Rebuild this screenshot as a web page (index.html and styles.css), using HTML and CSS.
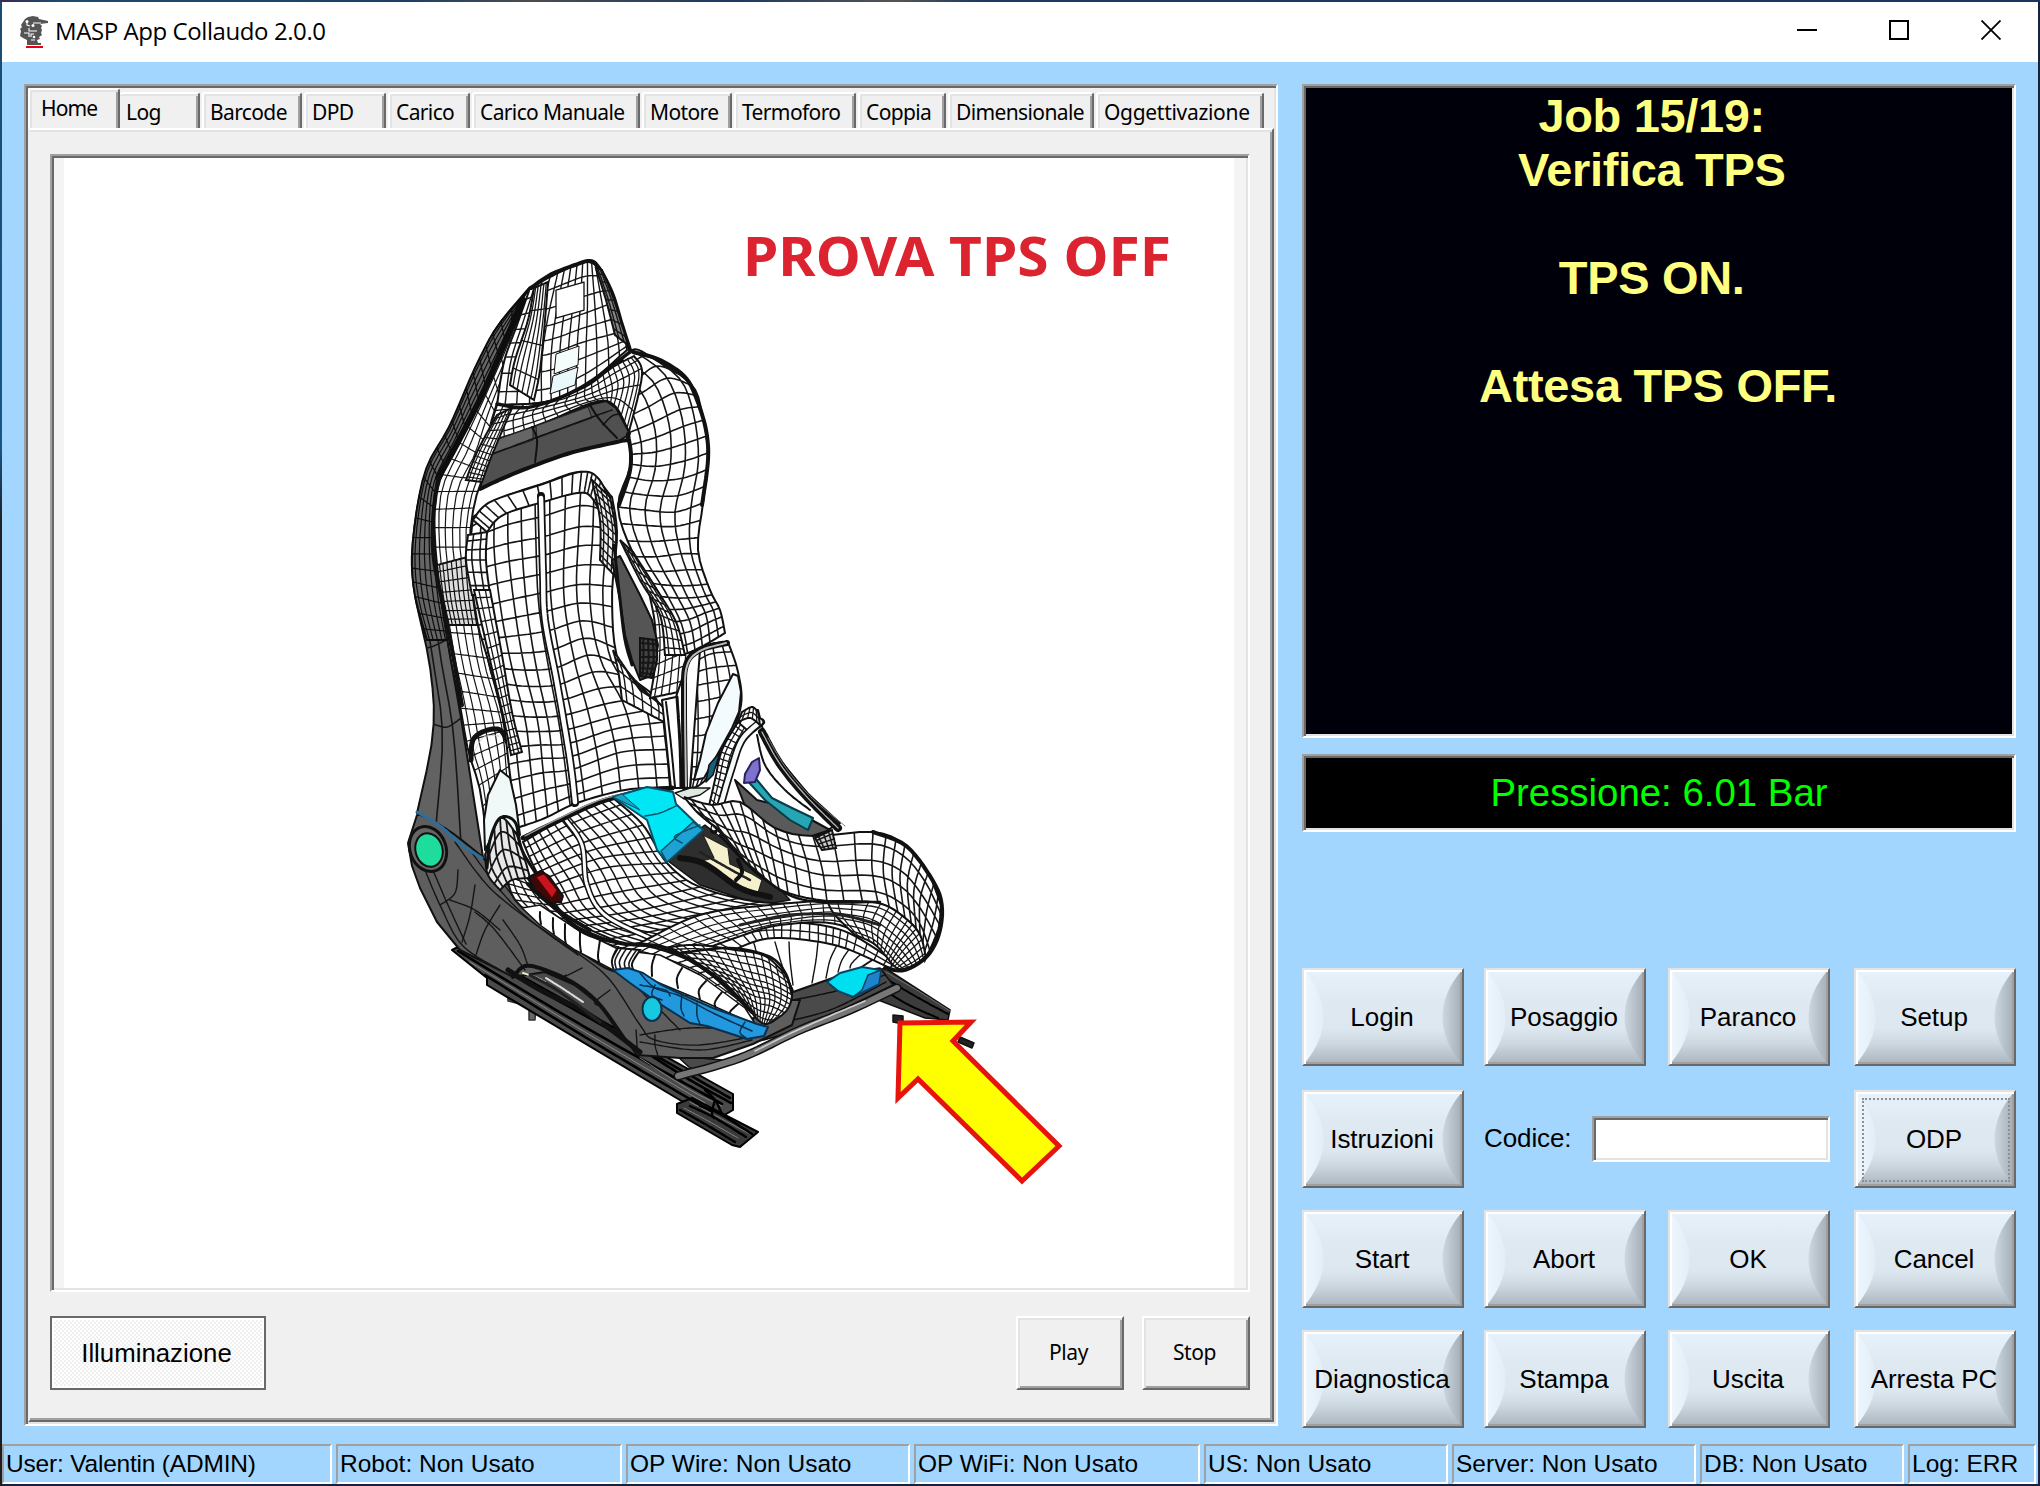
FILE: index.html
```html
<!DOCTYPE html>
<html lang="it">
<head>
<meta charset="utf-8">
<title>MASP App Collaudo 2.0.0</title>
<link rel="stylesheet" href="styles.css">
</head>
<body>
<div class="window">
  <header class="titlebar">
    <svg class="app-icon" viewBox="0 0 28 32" width="28" height="32">
      <path d="M3 6 L5 3 L8 1 L13 0 L18 1 L19 3 L28 5 V7 L20 8 L22 10 L21 12 L22 14 L21 17 L22 19 L19 21 L20 23 L17 24 L18 27 L21 27 V29 H7 V24 L3 22 L0 20 L1 15 L0 13 L2 11 L1 9 Z" fill="#555"/>
      <path d="M7 6 v3 l3 1 M13 7 h8 M9 12 v3 h8 M4 17 h5 v4 M14 18 h-3 v3 M11 24 h4" fill="none" stroke="#fff" stroke-width="1.1"/>
      <circle cx="7" cy="5.500" r="1.500" fill="#fff"/><circle cx="13" cy="9.500" r="1.500" fill="#fff"/><circle cx="14" cy="21" r="1.300" fill="#fff"/>
      <rect x="6" y="30" width="17" height="2" fill="#e60012"/>
    </svg>
    <h1 class="title">MASP App Collaudo 2.0.0</h1>
    <div class="controls">
      <svg viewBox="0 0 20 20" width="20" height="20"><rect y="9" width="20" height="2"/></svg>
      <svg viewBox="0 0 20 20" width="20" height="20"><rect x="1" y="1" width="18" height="18" fill="none" stroke="#000" stroke-width="2"/></svg>
      <svg viewBox="0 0 20 20" width="20" height="20"><path d="M.5 .5 L19.5 19.5 M19.5 .5 L.5 19.5" stroke="#000" stroke-width="1.8"/></svg>
    </div>
  </header>

  <main class="content">
    <section class="notebook">
      <nav class="tabs">
        <span class="tab tab-active w-home">Home</span>
        <span class="tab tab-first w-log">Log</span>
        <span class="tab w-barcode">Barcode</span>
        <span class="tab w-dpd">DPD</span>
        <span class="tab w-carico">Carico</span>
        <span class="tab w-manuale">Carico Manuale</span>
        <span class="tab w-motore">Motore</span>
        <span class="tab w-termo">Termoforo</span>
        <span class="tab w-coppia">Coppia</span>
        <span class="tab w-dim">Dimensionale</span>
        <span class="tab w-ogg">Oggettivazione</span>
      </nav>
      <div class="page">
        <div class="picture">
          <svg id="seat" class="seat" viewBox="64 158 1170 1130" width="1170" height="1130"></svg>
        </div>
        <div class="page-actions">
          <button class="toggle">Illuminazione</button>
          <button class="plain">Play</button>
          <button class="plain">Stop</button>
        </div>
      </div>
    </section>

    <aside class="side">
      <div class="message"><p>Job 15/19: </p><p>Verifica TPS </p><p> </p><p>TPS ON. </p><p> </p><p>Attesa TPS OFF.</p></div>
      <div class="pressure">Pressione: 6.01 Bar</div>
      <div class="keys">
        <button class="key"><span>Login</span></button>
        <button class="key"><span>Posaggio</span></button>
        <button class="key"><span>Paranco</span></button>
        <button class="key"><span>Setup</span></button>
        <button class="key"><span>Istruzioni</span></button>
        <label class="code"><span class="code-label">Codice:</span><input class="code-input" type="text"></label>
        <button class="key key-focus"><span>ODP</span></button>
        <button class="key"><span>Start</span></button>
        <button class="key"><span>Abort</span></button>
        <button class="key"><span>OK</span></button>
        <button class="key"><span>Cancel</span></button>
        <button class="key"><span>Diagnostica</span></button>
        <button class="key"><span>Stampa</span></button>
        <button class="key"><span>Uscita</span></button>
        <button class="key"><span>Arresta PC</span></button>
      </div>
    </aside>
  </main>

  <footer class="status">
    <span>User: Valentin (ADMIN)</span>
    <span>Robot: Non Usato</span>
    <span>OP Wire: Non Usato</span>
    <span>OP WiFi: Non Usato</span>
    <span>US: Non Usato</span>
    <span>Server: Non Usato</span>
    <span>DB: Non Usato</span>
    <span>Log: ERR</span>
  </footer>
</div>
<script src="seat.js"></script>
</body>
</html>
```
FILE: styles.css
```css
* { box-sizing: border-box; }
body {
  margin: 0;
  width: 2040px;
  height: 1486px;
  padding: 2px;
  background: linear-gradient(90deg, #3b2a55 0, #1c4a70 3%, #1d4066 20%, #4b4d50 26%, #1b3a63 36%, #555 44%, #1b3a63 48%, #1b3563 100%) top / 100% 2px no-repeat,
    linear-gradient(#1c4a70, #16568a 30%, #202023 35%, #1c1c22) left / 2px 100% no-repeat,
    #15233f;
  overflow: hidden;
}
button, input { font: inherit; color: inherit; border-radius: 0; padding: 0; margin: 0; }
.window {
  width: 2036px;
  height: 1482px;
  background: #a2d6ff;
  display: flex;
  flex-direction: column;
  color: #000;
}
.titlebar {
  height: 60px;
  background: #fff;
  display: flex;
  align-items: center;
  padding: 0 37px 0 18px;
}
.app-icon { display: block; }
.title {
  margin: 0 0 2px 7px;
  font: 400 24px/34px "Open Sans", "Noto Sans", sans-serif;
  letter-spacing: -0.42px;
  flex: 1;
}
.controls { display: flex; gap: 72px; margin-top: -4px; }
.controls svg { display: block; }

.content { flex: 1; display: flex; padding: 22px 22px 0; min-height: 0; }

/* Notebook */
.notebook {
  width: 1254px;
  height: 1342px;
  background: #f0f0f0;
  border: 2px solid;
  border-color: #a0a0a0 #fff #fff #a0a0a0;
  box-shadow: inset 2px 2px #696969, inset -2px -2px #e3e3e3;
  padding: 2px;
  display: flex;
  flex-direction: column;
}
.tabs {
  height: 42px;
  display: flex;
  align-items: flex-end;
  gap: 2px;
  font: 400 21px/28px "Noto Sans", sans-serif;
  letter-spacing: -0.62px;
  white-space: nowrap;
}
.tab {
  height: 36px;
  margin-bottom: 2px;
  border: 2px solid;
  border-color: #fff #696969 transparent #fff;
  border-bottom: 0;
  border-radius: 3px 3px 0 0;
  box-shadow: inset 2px 2px #e3e3e3, inset -2px 0 #a0a0a0;
  padding: 4px 0 0 6px;
}
.tab-active { height: 42px; margin-bottom: 0; padding: 4px 0 0 11px; letter-spacing: -0.9px; }
.tab-first { margin-left: -2px; border-left: 0; padding-left: 6px; box-shadow: inset 0 2px #e3e3e3, inset -2px 0 #a0a0a0; }
.w-home { width: 92px; }
.w-log { width: 80px; }
.w-barcode { width: 100px; }
.w-dpd { width: 82px; }
.w-carico { width: 82px; }
.w-manuale { width: 168px; }
.w-motore { width: 90px; }
.w-termo { width: 122px; }
.w-coppia { width: 88px; }
.w-dim { width: 146px; }
.w-ogg { width: 168px; letter-spacing: -0.3px; }
.page {
  flex: 1;
  margin-top: -2px;
  border: 2px solid;
  border-color: #fff #696969 #696969 #f0f0f0;
  box-shadow: inset 0 2px #e3e3e3, inset -2px -2px #a0a0a0;
  padding: 24px 20px 0 20px;
}
.picture {
  width: 1200px;
  height: 1138px;
  border: 2px solid;
  border-color: #a0a0a0 #fff #fff #a0a0a0;
  box-shadow: inset 2px 2px #696969, inset -2px -2px #e3e3e3;
  background: #f4f4f4;
  padding: 2px 12px;
}
.seat { display: block; background: #fff; }
.page-actions { display: flex; gap: 18px; margin-top: 24px; width: 1200px; }
.toggle {
  width: 216px;
  height: 74px;
  margin-right: auto;
  padding-right: 3px;
  border: 2px solid #696969;
  box-shadow: inset 0 0 0 2px #fff;
  background: repeating-conic-gradient(#f0f0f0 0 25%, #fff 0 50%) 0 0 / 4px 4px;
  font: 400 25.8px/30px "Liberation Sans", Arial, sans-serif;
}
.plain {
  width: 108px;
  height: 74px;
  padding: 0 3px 2px 0;
  border: 2px solid;
  border-color: #fff #696969 #696969 #fff;
  box-shadow: inset 2px 2px #e3e3e3, inset -2px -2px #a0a0a0;
  background: #f0f0f0;
  font: 400 21px/28px "Noto Sans", sans-serif;
  letter-spacing: -0.4px;
}

/* Right column */
.side {
  width: 714px;
  margin-left: 24px;
  font: 400 26px/30px "Liberation Sans", Arial, sans-serif;
}
.message, .pressure {
  border: 2px solid;
  border-color: #a0a0a0 #fff #fff #a0a0a0;
  box-shadow: inset 2px 2px #696969, inset -2px -2px #e3e3e3;
  text-align: center;
}
.message {
  height: 654px;
  background: #00000a;
  color: #ffff80;
  font-weight: 700;
  font-size: 47px;
  letter-spacing: -0.35px;
  line-height: 54px;
  padding: 3px 2px 0 0;
  white-space: pre;
}
.message p { margin: 0; height: 54px; }
.pressure {
  height: 78px;
  margin-top: 16px;
  background: #000;
  color: #0f0;
  font-size: 38.4px;
  line-height: 74px;
}
.keys {
  margin-top: 136px;
  display: grid;
  grid-template-columns: 182px 184px 186px 162px;
  grid-template-rows: 122px 120px 120px 98px;
}
.key {
  position: relative;
  width: 162px;
  height: 98px;
  overflow: hidden;
  border: 2px solid;
  border-color: #e3e3e3 #696969 #696969 #e3e3e3;
  background: linear-gradient(#e6f2fc 0, #dfe9f1 32%, #dde7ef 62%, #ced8e0 78%, #aab5bf 100%);
  white-space: nowrap;
}
.key::before, .key::after {
  content: "";
  position: absolute;
  top: 0;
  width: 24px;
  height: 94px;
}
.key::before {
  left: 0;
  background: linear-gradient(90deg, #eef7ff, #e2edf7 85%);
  clip-path: path("M0 0 C26 30 26 64 0 94 Z");
}
.key::after {
  right: 0;
  background: linear-gradient(90deg, #cfd9e1 15%, #a3adb7);
  clip-path: path("M24 0 C-2 30 -2 64 24 94 Z");
}
.key span {
  position: absolute;
  inset: 0;
  z-index: 1;
  padding-right: 2px;
  line-height: 95px;
  letter-spacing: -0.05px;
  box-shadow: inset 2px 2px #fff, inset -2px -2px #a0a0a0;
}
.key-focus span::after {
  content: "";
  position: absolute;
  inset: 6px 4px 4px 6px;
  border: 2px dotted #8f8f8f;
}
.code { grid-column: span 2; display: flex; height: 98px; align-items: center; width: 346px; }
.code-label { width: 108px; padding-bottom: 2px; letter-spacing: -0.1px; }
.code-input {
  width: 238px;
  height: 46px;
  background: #fff;
  border: 2px solid;
  border-color: #a0a0a0 #fff #fff #a0a0a0;
  box-shadow: inset 2px 2px #696969, inset -2px -2px #e3e3e3;
}

/* Status bar */
.status {
  height: 40px;
  display: grid;
  grid-template-columns: 330px 286px 284px 286px 244px 244px 204px 128px;
  column-gap: 4px;
  font: 400 24.5px/36px "Liberation Sans", Arial, sans-serif;
  white-space: nowrap;
}
.status span {
  border: 2px solid;
  border-color: #a0a0a0 #fff #fff #a0a0a0;
  padding-left: 2px;
}
.status span:first-child { letter-spacing: -0.2px; }
```
FILE: seat.js
```js
(function () {
  var svg = document.getElementById('seat');
  var NS = 'http://www.w3.org/2000/svg';

  function el(name, attrs, text) {
    var e = document.createElementNS(NS, name);
    for (var k in attrs) e.setAttribute(k, attrs[k]);
    if (text) e.textContent = text;
    svg.appendChild(e);
    return e;
  }
  function parse(s) {
    return s.trim().split(/\s+/).map(function (p) { return p.split(',').map(Number); });
  }
  function poly(s, fill, stroke, w) {
    el('polygon', { points: s, fill: fill, stroke: stroke || '#111', 'stroke-width': w === undefined ? 1.5 : w, 'stroke-linejoin': 'round' });
  }
  // Catmull-Rom point on a list of points, t in 0..1
  function cr(p, t) {
    var n = p.length - 1, f = t * n, i = Math.min(Math.floor(f), n - 1), u = f - i;
    var a = p[Math.max(i - 1, 0)], b = p[i], c = p[i + 1], d = p[Math.min(i + 2, n)];
    return [0, 1].map(function (k) {
      return 0.5 * (2 * b[k] + (c[k] - a[k]) * u + (2 * a[k] - 5 * b[k] + 4 * c[k] - d[k]) * u * u + (3 * b[k] - a[k] - 3 * c[k] + d[k]) * u * u * u);
    });
  }
  function d(pts) {
    return 'M' + pts.map(function (p) { return p[0].toFixed(1) + ' ' + p[1].toFixed(1); }).join('L');
  }
  function curve(s, stroke, w) {
    var p = parse(s), out = [];
    for (var i = 0; i <= 40; i++) out.push(cr(p, i / 40));
    el('path', { d: d(out), fill: 'none', stroke: stroke || '#111', 'stroke-width': w || 1.5, 'stroke-linecap': 'round' });
  }
  // Surface patch: rows of control points, nu columns by nv rows of cells
  function mesh(rows, nu, nv, fill, w, stroke) {
    rows = rows.map(parse);
    function pt(u, v) { return cr(rows.map(function (r) { return cr(r, u); }), v); }
    function line(fn) { var o = []; for (var i = 0; i <= 32; i++) o.push(fn(i / 32)); return o; }
    var edge = line(function (t) { return pt(t, 0); })
      .concat(line(function (t) { return pt(1, t); }))
      .concat(line(function (t) { return pt(1 - t, 1); }))
      .concat(line(function (t) { return pt(0, 1 - t); }));
    var path = '', i;
    for (i = 1; i < nu; i++) (function (u) { path += d(line(function (t) { return pt(u, t); })); })(i / nu);
    for (i = 1; i < nv; i++) (function (v) { path += d(line(function (t) { return pt(t, v); })); })(i / nv);
    el('path', { d: d(edge) + 'Z', fill: fill || '#fff', stroke: stroke || '#111', 'stroke-width': 2 });
    el('path', { d: path, fill: 'none', stroke: stroke || '#161616', 'stroke-width': w || 1.5 });
  }

  // Rear and right rails
  poly('873,972 885,968 950,1010 948,1020 925,1018 873,998', '#3c3c3c');
  curve('880,975 915,996 948,1014', '#000', 2); curve('876,984 905,1003 938,1018', '#000', 2); curve('886,972 920,992 950,1011', '#777', 1);
  poly('893,1015 903,1016 903,1024 893,1022', '#222');
  poly('960,1037 974,1043 972,1048 958,1042', '#222');

  // Left rail
  poly('507,988 527,998 520,1004 508,1001', '#555', '#333');
  poly('529,1003 536,1006 535,1020 529,1020', '#666', '#333');
  poly('505,968 540,965 600,988 640,1050 620,1056', '#4a4a4a');
  poly('452,950 464,944 733,1094 733,1110 716,1120 700,1112 487,985 487,978', '#4a4a4a', '#000', 2);
  poly('677,1104 692,1098 758,1132 740,1147 732,1145 677,1113', '#3a3a3a', '#000', 2);
  ['458,951 590,1030 722,1104', '464,948 600,1024 730,1098', '485,975 590,1040 712,1112', '650,1055 690,1080 731,1103'].forEach(function (s) { curve(s, '#000', 2.6); });
  ['470,962 590,1035 705,1103', '640,1058 690,1090 722,1106', '684,1108 710,1122 738,1138', '690,1102 720,1118 750,1134'].forEach(function (s) { curve(s, '#888', 1); });
  ['680,1110 705,1124 735,1142', '690,1106 715,1118 746,1137', '700,1106 720,1114 752,1134', '705,1090 715,1100 722,1114', '715,1100 712,1112 714,1118'].forEach(function (s) { curve(s, '#000', 2.4); });
  poly('677,1056 722,1060 700,1070 690,1068', '#4a4a4a');

  // Right base pan
  poly('760,990 800,985 830,975 880,968 893,985 800,1030 745,1045', '#4a4a4a');
  curve('793,1000 840,990 885,975', '#111'); curve('770,1025 830,1010 886,982', '#111'); curve('792,990 792,1006 792,1020', '#111');

  // Left base shell
  poly('417,815 408,843 412,866 420,888 437,922 460,950 513,977 545,972 575,985 600,1005 620,1032 637,1055 680,1058 713,1058 753,1044 792,1025 800,1000 770,1000 680,970 613,955 580,935 527,905 487,862 460,835 435,815', '#5e5e5e', '#111', 2);
  ['487,862 530,915 580,947 620,972 650,1000 680,1030', '470,850 500,890 530,920 580,955 610,980 640,1025 655,1040 700,1045 760,1035', '455,842 490,888 540,928 578,955',
   '425,870 440,905 462,945 500,970', '432,868 448,905 466,944', '475,885 470,915 462,942', '500,905 485,930 476,955', '450,900 475,910 500,930', '475,912 495,930 525,970',
   '503,920 520,945 528,966', '582,968 562,978 566,975', '610,990 595,1002 600,1006', '440,905 455,893 458,870', '640,1035 690,1028 750,1030', '640,1042 700,1050 752,1040', '636,1030 637,1045 637,1054', '655,1035 655,1045 658,1056'].forEach(function (s) { curve(s, '#151515', 1.4); });
  curve('513,977 525,966 545,970 575,984 600,1005 625,1040', '#111', 4);
  curve('523,973 535,977 545,982', '#f2eecb', 2); curve('546,978 565,990 583,1002', '#ddd', 2);
  curve('508,970 540,990 590,1015 640,1052', '#111', 5);
  curve('530,975 560,992 600,1022', '#222', 3);

  // Cross bar
  curve('678,1076 740,1058 800,1030 850,1010 897,988', '#111', 9);
  curve('678,1076 740,1058 800,1030 850,1010 897,988', '#777', 6);
  curve('755,1051 800,1029 865,1001', '#ccc', 1.6);

  // Backrest outer shell
  mesh(['533,286 528,290 522,300', '497,327 500,335 503,350', '477,367 478,378 480,400', '452,425 455,432 457,445', '425,475 430,480 437,490', '413,540 422,540 436,540', '414,590 426,590 441,597', '430,667 437,665 450,655', '433,733 448,737 463,730', '417,813 448,830 483,857'], 3, 8, '#626262', 1.6);
  mesh(['530,287 522,298', '497,327 503,350', '474,370 480,400', '450,425 457,445', '425,472 437,490', '413,540 436,540', '414,590 441,597', '427,640 448,640'], 6, 24, '#666', 1.2, '#0c0c0c');

  // Left bolster of the backrest
  mesh(['520,303 545,330', '503,350 510,385', '480,400 497,425', '457,445 492,465', '437,490 478,490', '435,540 470,540', '441,597 478,595', '450,655 488,660', '460,705 503,710', '468,750 508,735', '480,790 510,770', '488,850 512,820'], 6, 30, '#fff', 1.2);
  mesh(['437,565 475,555', '441,597 478,595', '447,625 482,625'], 10, 7, '#ddd', 1.2, '#111');
  curve('471,760 473,740 485,731 500,730 509,745', '#111', 5); curve('474,752 484,737 500,736', '#ccc', 1);

  // Backrest centre
  mesh(['473,517 505,497 542,484 585,472 612,497', '470,560 505,550 543,543 582,533 617,535', '477,620 512,612 545,605 580,597 612,600', '490,667 522,670 555,668 590,655 620,665', '503,720 535,722 565,720 610,708 657,700', '510,775 540,768 572,765 620,748 666,745', '517,828 545,818 577,803 625,790 670,787'], 11, 20, '#fff', 1.6);
  mesh(['473,520 490,502 540,485 580,472 598,478 612,505', '487,532 503,515 543,502 578,493 592,498 606,525'], 18, 1, '#fff', 1.6);
  mesh(['468,535 487,532', '466,560 486,560', '472,595 490,595'], 3, 6, '#fff', 1.6);
  mesh(['592,480 610,497', '600,520 616,535', '600,560 614,575'], 4, 10, '#eee', 1.4);
  curve('541,496 543,573 545,620 557,683 570,760 575,803', '#111', 8);
  curve('541,498 543,573 545,620 557,683 570,760 575,802', '#fff', 4.5);
  mesh(['474,590 490,590', '490,660 502,655', '503,715 512,712', '511,755 522,752'], 3, 18, '#fff', 1.3);
  mesh(['613,650 640,690', '618,670 662,706', '622,700 664,722'], 6, 4, '#fff', 1.4);

  // Right wing
  mesh(['648,588 672,592', '655,625 690,622', '655,665 690,650', '650,698 688,690'], 6, 9, '#fff', 1.3);
  mesh(['597,385 612,372 632,350 648,355', '613,405 640,390 665,375 690,383', '628,440 655,430 682,418 702,413', '630,467 655,470 685,465 708,457', '618,507 645,510 675,512 703,503', '633,553 655,553 680,550 698,550', '657,590 675,592 695,592 710,590', '675,625 690,622 706,615 720,610', '682,655 695,650 710,642 725,633'], 6, 22, '#fff', 1.6);
  curve('633,352 660,360 685,377 697,400 706,430 708,460 702,505', '#111', 4);
  mesh(['620,540 633,552', '640,580 657,590', '660,615 676,622', '665,655 685,655'], 4, 12, '#fff', 1.4);
  // Dark slot beside the backrest
  poly('612,560 620,556 640,595 652,620 658,645 653,675 640,680 632,660 625,635 620,600', '#555', '#111', 2);
  mesh(['640,638 656,640', '640,660 657,660', '640,676 652,678'], 4, 7, '#444', 2);
  curve('614,545 620,600 625,640 632,665', '#111', 3);

  // Lower wing and stripes
  mesh(['690,660 708,645 728,642', '690,680 712,675 738,672', '690,720 715,715 741,705', '692,760 708,758 727,745', '690,788 698,786 708,778'], 5, 10, '#fff', 1.5);
  poly('662,700 676,697 690,655 700,650 690,788 671,788', '#fff', '#111', 2);
  curve('666,702 671,745 675,787', '#111', 2); curve('677,697 680,745 681,787', '#111', 3);
  curve('727,643 700,650 686,665 684,700 685,788', '#111', 6); curve('726,643 700,651 687,666 685,700 686,786', '#bbb', 2);
  poly('733,674 738,676 741,692 739,712 732,728 716,757 704,778 694,780 700,760 706,733 718,703', '#f4fbff', '#111', 2);

  // Headrest and arch
  mesh(['530,288 560,272 586,262 600,268', '517,325 550,320 585,308 612,298', '504,362 545,360 583,347 624,335', '497,405 545,402 582,388 627,350'], 13, 8, '#fff', 1.4);
  poly('553,376 578,367 575,385 550,394', '#e9f8fa', '#111', 1); poly('556,354 579,346 578,365 554,374', '#f4fcfc', '#111', 1);
  poly('556,290 584,282 584,310 556,318', '#fff', '#111', 1.3);
  mesh(['534,288 548,282', '528,320 545,320', '515,360 540,370', '510,385 534,400'], 6, 4, '#fff', 1.3);
  curve('531,288 550,275 575,265 590,261 599,268 612,293 622,325 630,350', '#111', 4);
  mesh(['596,268 602,270', '606,300 614,300', '615,335 628,345'], 3, 8, '#888', 1.4);
  mesh(['497,405 545,402 585,387 613,367 634,356', '492,422 533,412 585,398 618,385 642,375', '490,441 535,427 592,403 614,405 629,432'], 20, 5, '#fff', 1.3);
  curve('497,404 530,407 580,388 630,352', '#111', 3.5);
  poly('493,441 533,427 593,404 606,401 616,408 630,434 617,442 567,453 513,473 480,489 487,460', '#505050', '#111', 2);
  poly('493,441 533,427 533,440 490,455', '#666', '#222', 1); poly('536,426 588,407 592,418 537,438', '#606060', '#222', 1);
  curve('487,456 535,438 595,416 612,410', '#111'); curve('532,427 537,440 535,462', '#111', 2); curve('590,405 600,420 617,438', '#111', 2); curve('603,425 612,416 620,414', '#111');
  curve('480,489 513,474 567,454 617,442 628,440', '#111', 4);
  curve('628,434 631,455 629,475 619,505', '#111', 4);

  // Dense edge running down the left of the headrest
  curve('523,300 504,345 482,395 458,442 438,478', '#0d0d0d', 6);
  curve('438,478 433,520 434,560 442,600 452,650 462,705', '#111', 4);
  mesh(['497,415 512,408', '478,450 492,455', '466,480 482,482'], 5, 12, '#fff', 1.2);

  // Cushion well, seat belt guide and runner
  poly('660,855 705,825 762,870 790,900 760,905 700,885', '#2e2e2e');
  poly('703,835 728,848 730,864 752,874 762,880 758,893 735,887 697,862 714,858', '#f5f1cd', '#222', 1.2);
  curve('680,858 705,864 740,888 770,897', '#111', 6); curve('700,852 728,868 750,880', '#222', 2.5); curve('738,860 742,872 736,880', '#111', 4);
  poly('675,793 690,788 710,788 700,795 684,799', '#dfe9df');

  // Cushion front face
  poly('660,950 700,935 753,930 827,930 880,955 860,968 827,980 793,992 783,970 720,960', '#fff', '#111', 2);
  ['753,940 757,955 760,975', '775,942 783,968 793,990', '789,942 790,960 793,985', '818,942 816,960 812,983', '837,945 830,960 826,978', '850,948 842,960 838,972', '862,953 852,963 850,968'].forEach(function (s) { curve(s, '#111', 1.4); });
  mesh(['683,945 740,925 780,922 820,925 853,935 895,962', '720,957 753,942 780,938 820,942 850,950 890,968'], 22, 2, '#fff', 1.4);

  // Cushion main surface
  mesh(['523,842 565,818 613,798', '533,865 585,842 643,825', '546,888 605,868 667,863', '563,913 625,903 700,887', '595,932 660,922 760,902', '640,950 720,930 830,903'], 13, 15, '#fff', 1.5);
  curve('566,820 582,845 587,885 605,915 650,938', '#111', 6); curve('566,820 582,845 587,885 605,915 650,938', '#fff', 3);
  mesh(['640,943 700,915 770,905 840,900 885,902', '660,950 720,930 780,918 840,912 900,925', '690,955 735,938 780,925 840,925 890,955'], 22, 6, '#fff', 1.2);
  curve('523,838 560,820 600,802 640,792 672,788', '#111', 5); curve('525,836 560,818 600,800 640,790', '#999', 1.4);
  poly('613,797 647,787 673,792 676,804 703,830 667,862 657,850 647,820', '#00e6f4', '#07506a', 2);
  poly('703,830 667,862 661,851 693,822', '#1ea2d4', '#07506a', 1.5); curve('645,816 660,813 676,806', '#07506a', 1.5); curve('682,843 675,836 700,825', '#07506a');
  poly('613,797 622,794 640,810', '#1aa3c4', '#07506a', 1);

  // Right cushion bolster
  poly('745,712 758,710 763,730 780,760 807,793 840,823 813,838 760,835 720,815 712,800 720,765', '#fff', '#111', 2);
  poly('735,780 757,800 790,808 830,830 800,840 770,832 745,806', '#5a5a5a', '#111', 2);
  poly('745,778 757,780 772,798 792,808 813,818 808,830 790,820 765,800', '#26a6b4', '#083c46', 2);
  poly('752,762 759,758 760,770 755,782 744,783 745,774', '#7d72cc', '#2a1f60', 2);
  mesh(['738,722 747,730', '722,750 735,755', '715,780 728,785', '708,810 718,822'], 3, 14, '#fff', 1.3);
  curve('761,722 742,740 731,770 722,800 714,830', '#111', 8); curve('760,722 742,740 731,770 722,800 714,828', '#f5fbfb', 4.5);
  mesh(['742,712 752,707 758,712', '738,722 750,718 760,725'], 5, 2, '#fff', 1.3);
  curve('762,732 780,764 807,797 838,828', '#111', 8); curve('762,732 780,764 807,797 838,828', '#bbb', 1.2);
  curve('768,738 786,768 812,798 845,826', '#777', 1); curve('757,735 765,765 785,790 810,810', '#111', 2);
  poly('720,752 713,775 706,782 709,765', '#17607a');
  mesh(['684,797 712,805 740,802 775,828 813,836 873,832 905,845 928,873 941,905', '700,815 730,835 752,842 782,856 822,868 872,868 900,878 920,900 938,930', '720,830 745,862 765,880 788,893 827,901 878,903 905,918 920,935 925,960'], 24, 5, '#fff', 1.6);
  mesh(['827,901 878,903 905,918 920,935 926,958', '835,915 870,922 893,938 905,950 915,965', '855,935 873,943 885,955 893,965 900,970'], 15, 7, '#fff', 1.3);
  curve('873,832 905,845 928,873 941,900 940,930 928,955 905,970 885,968', '#111', 4);
  curve('720,835 750,866 800,899 880,902', '#111', 2.5); curve('740,925 790,915 840,915 880,925', '#222', 3);
  mesh(['815,838 832,830', '822,850 836,848'], 4, 4, '#ccc', 1.5);
  poly('827,982 840,973 862,967 880,970 877,985 853,997 838,991', '#00dff0', '#0a4266', 2);
  poly('862,990 868,975 881,970 879,984 853,997', '#1e82cc', '#0a4266', 1.5);

  // Left thigh bolster
  mesh(['500,850 512,850', '506,872 530,882', '515,900 550,905', '545,925 580,928', '585,955 620,943', '613,971 655,948', '650,978 700,965', '690,1000 730,985', '747,1027 760,1010'], 4, 28, '#fff', 1.4);
  poly('522,908 540,905 575,928 620,950 660,955 700,975 745,1008 756,1025 700,1000 640,975 613,970 575,950 540,925', '#fff', '#111', 1.5);
  ['540,912 540,918 541,924', '553,918 553,928 554,934', '565,924 565,938 566,944', '580,932 580,944 581,952', '600,940 598,955 599,962', '618,947 613,958 616,970', '655,955 652,965 652,976', '682,968 677,978 678,988', '706,981 699,990 700,999', '722,992 715,1002 716,1009', '738,1004 730,1012 732,1017'].forEach(function (s) { curve(s, '#111', 2); });
  mesh(['618,948 640,950', '612,960 632,964', '614,971 636,974'], 5, 1, '#fff', 1.6);
  mesh(['670,947 697,945 735,950 765,956 786,975', '690,960 715,965 745,975 770,982 792,993', '715,978 735,987 755,998 772,1002 787,1010', '745,1006 752,1013 758,1020 765,1024 772,1022'], 14, 11, '#fff', 1.3);
  curve('545,897 580,930 620,943 665,948 713,975 752,1012', '#111', 4);
  curve('680,953 730,948 768,956 785,972 792,995', '#111', 2.5);

  // Buckle side
  poly('500,770 510,778 516,805 520,835 500,822 485,850 484,820 488,795', '#f1f8f8', '#111', 2);
  mesh(['485,855 500,818 517,835', '488,875 503,850 525,860', '500,890 512,880 530,878'], 6, 4, '#e8e8e8', 1.8);
  curve('487,868 490,840 500,818 515,822 522,850 540,880', '#111', 3);
  poly('529,877 541,871 549,876 563,896 561,902 550,903 535,892', '#3c0808', '#111', 2);
  poly('536,877 544,874 557,890 552,898', '#c81420', '#500', 1);
  curve('528,884 545,900 565,915 590,930', '#111', 4);

  // Recliner knob and trim
  curve('417,812 440,826 462,845 482,858', '#2b6fa0', 3);
  el('ellipse', { cx: 428, cy: 849, rx: 18, ry: 23, fill: '#666', stroke: '#111', 'stroke-width': 3, transform: 'rotate(-20 428 849)' });
  el('ellipse', { cx: 429, cy: 850, rx: 13.5, ry: 17, fill: '#1edc9c', stroke: '#111', 'stroke-width': 2, transform: 'rotate(-15 429 850)' });

  // Blue side cover
  poly('613,970 628,968 643,973 660,984 672,990 713,1008 757,1024 768,1027 764,1036 747,1039 707,1026 690,1023 657,1002 630,983', '#2298de', '#0a3050', 2);
  ['640,973 655,988 680,996 715,1014 752,1031', '655,985 652,995 662,1000', '682,995 681,1008 684,1016', '697,1003 697,1015 700,1024', '640,985 665,990 670,996', '745,1022 740,1032 746,1038'].forEach(function (s) { curve(s, '#0a3050', 1.5); });
  el('ellipse', { cx: 652, cy: 1009, rx: 9.5, ry: 12, fill: '#16c8e0', stroke: '#0a3050', 'stroke-width': 2 });

  // Pointer arrow
  el('polygon', { points: '900,1023 971,1022 953,1041 1059,1146 1022,1181 918,1079 898,1098', fill: '#ff0', stroke: '#e6140c', 'stroke-width': 5 });

  el('text', { x: 743, y: 276, textLength: 428, lengthAdjust: 'spacingAndGlyphs', fill: '#dc2430', 'font-family': '"Noto Sans","Open Sans",sans-serif', 'font-weight': 700, 'font-size': 54 }, 'PROVA TPS OFF');
})();
```
